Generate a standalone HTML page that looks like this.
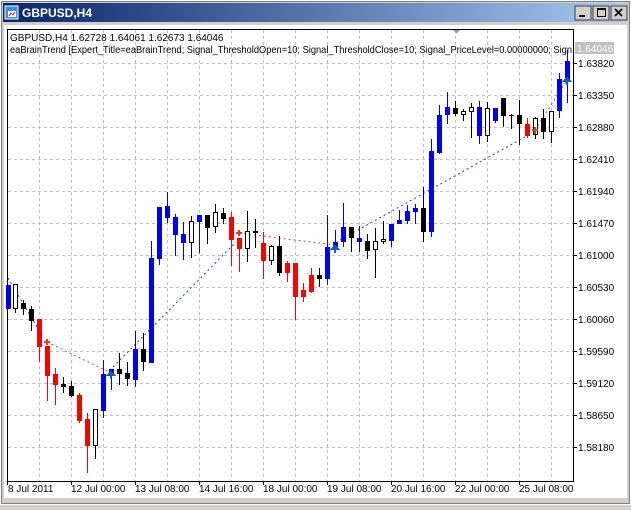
<!DOCTYPE html><html><head><style>body{margin:0;width:631px;height:505px;overflow:hidden;background:#d4d0c8}</style></head><body>
<svg width="631" height="505" xmlns="http://www.w3.org/2000/svg" font-family="Liberation Sans, sans-serif" shape-rendering="crispEdges">
<rect x="0" y="0" width="631" height="505" fill="#d4d0c8"/>
<rect x="0.5" y="0.5" width="630" height="504" fill="none" stroke="#fff"/>
<rect x="1.5" y="1.5" width="628" height="502" fill="none" stroke="#808080"/>
<defs><linearGradient id="tg" x1="0" x2="1"><stop offset="0" stop-color="#0a246a"/><stop offset="1" stop-color="#a6caf0"/></linearGradient></defs>
<rect x="3" y="3" width="625" height="19" fill="url(#tg)"/>
<rect x="5" y="6" width="13" height="13" fill="#3a8ee6" stroke="#fff"/><rect x="8" y="11" width="8" height="6" fill="#fff"/><path d="M9 16L11 13L13 15L15 12" stroke="#e03020" fill="none"/>
<text x="22" y="17" font-size="12" font-weight="bold" fill="#fff">GBPUSD,H4</text>
<g><rect x="575" y="6" width="16" height="14" fill="#d4d0c8" stroke="#404040"/><rect x="579" y="15" width="6" height="2" fill="#000"/>
<rect x="593" y="6" width="16" height="14" fill="#d4d0c8" stroke="#404040"/><rect x="597.5" y="8.5" width="8" height="8" fill="none" stroke="#000"/><rect x="597" y="8" width="9" height="2" fill="#000"/>
<rect x="611" y="6" width="16" height="14" fill="#d4d0c8" stroke="#404040"/><path d="M615 9L622 16M622 9L615 16" stroke="#000" stroke-width="1.6" shape-rendering="auto"/></g>
<rect x="4" y="25" width="623" height="473" fill="#fff"/>
<rect x="7.5" y="29.5" width="566" height="452" fill="none" stroke="#000"/>
<g stroke="#c0c0c0" stroke-dasharray="3,3">
<path d="M8 63.5H573M8 95.5H573M8 127.5H573M8 159.5H573M8 191.5H573M8 223.5H573M8 255.5H573M8 287.5H573M8 319.5H573M8 351.5H573M8 383.5H573M8 415.5H573M8 447.5H573"/>
<path d="M39.5 30V481M71.5 30V481M103.5 30V481M135.5 30V481M167.5 30V481M199.5 30V481M231.5 30V481M263.5 30V481M295.5 30V481M327.5 30V481M359.5 30V481M391.5 30V481M423.5 30V481M455.5 30V481M487.5 30V481M519.5 30V481M551.5 30V481"/>
</g>
<path d="M453 30L460 30L456.5 34Z" fill="#a0a0a0"/>
<g stroke="#0050a0" stroke-dasharray="2,3" fill="none" shape-rendering="auto">
<path d="M8 278L43 337"/><path d="M113 367L236 242"/><path d="M340 240L532 133"/></g>
<g stroke="#e04020" stroke-dasharray="2,3" fill="none" shape-rendering="auto">
<path d="M47 342L111 373"/><path d="M239 233L335 245"/><path d="M535 130L567 80"/></g>
<path stroke="#0000ff" d="M8.5 285V309M103.5 360V418M111.5 369V390M135.5 331V387M151.5 241V363M159.5 207V265M167.5 192V223M175.5 214V256M183.5 222V260M199.5 215V253M327.5 215V285M335.5 230V250M343.5 203V247M359.5 226V252M391.5 224V247M399.5 210V224M407.5 205V224M415.5 204V224M431.5 139V237M439.5 105V154M447.5 92V124M479.5 101V144M495.5 108V123M559.5 73V118M567.5 50V103"/>
<path stroke="#ff0000" d="M39.5 319V362M47.5 346V401M55.5 368V405M79.5 393V423M87.5 413V473M231.5 212V266M239.5 238V272M263.5 232V279M287.5 261V282M295.5 263V320M303.5 283V302M311.5 268V293M527.5 118V138"/>
<path stroke="#000" d="M23.5 300V315M31.5 306V331M63.5 377V393M71.5 381V397M119.5 353V385M127.5 362V386M143.5 333V371M207.5 215V244M223.5 208V224M255.5 219V248M279.5 236V276M319.5 268V287M351.5 227V252M367.5 234V259M423.5 187V242M455.5 101V116M503.5 98V127M511.5 114V129M519.5 100V145M543.5 109V139M15.5 284V313M95.5 409V459M191.5 216V258M215.5 204V233M247.5 211V262M271.5 245V265M375.5 228V278M383.5 221V244M463.5 109V121M471.5 103V138M487.5 102V142M535.5 117V139M551.5 111V143"/>
<g fill="#0000ff">
<rect x="6" y="285" width="5" height="24"/><rect x="101" y="374" width="5" height="37"/><rect x="109" y="369" width="5" height="5"/><rect x="133" y="349" width="5" height="31"/><rect x="149" y="258" width="5" height="105"/><rect x="157" y="207" width="5" height="52"/><rect x="165" y="206" width="5" height="12"/><rect x="173" y="217" width="5" height="18"/><rect x="181" y="234" width="5" height="9"/><rect x="197" y="215" width="5" height="7"/><rect x="325" y="247" width="5" height="32"/><rect x="333" y="242" width="5" height="5"/><rect x="341" y="227" width="5" height="15"/><rect x="357" y="238" width="5" height="4"/><rect x="389" y="224" width="5" height="17"/><rect x="397" y="220" width="5" height="4"/><rect x="405" y="211" width="5" height="10"/><rect x="413" y="208" width="5" height="4"/><rect x="429" y="151" width="5" height="81"/><rect x="437" y="115" width="5" height="38"/><rect x="445" y="107" width="5" height="8"/><rect x="477" y="107" width="5" height="29"/><rect x="493" y="108" width="5" height="13"/><rect x="557" y="79" width="5" height="32"/><rect x="565" y="61" width="5" height="20"/></g>
<g fill="#ff0000">
<rect x="37" y="319" width="5" height="28"/><rect x="45" y="346" width="5" height="30"/><rect x="53" y="374" width="5" height="11"/><rect x="77" y="395" width="5" height="26"/><rect x="85" y="419" width="5" height="27"/><rect x="229" y="217" width="5" height="23"/><rect x="237" y="238" width="5" height="11"/><rect x="261" y="243" width="5" height="18"/><rect x="285" y="263" width="5" height="10"/><rect x="293" y="263" width="5" height="34"/><rect x="301" y="290" width="5" height="7"/><rect x="309" y="275" width="5" height="17"/><rect x="525" y="124" width="5" height="12"/></g>
<g fill="#000">
<rect x="21" y="303" width="5" height="6"/><rect x="29" y="309" width="5" height="12"/><rect x="61" y="384" width="5" height="3"/><rect x="69" y="386" width="5" height="10"/><rect x="117" y="369" width="5" height="5"/><rect x="125" y="373" width="5" height="6"/><rect x="141" y="349" width="5" height="13"/><rect x="205" y="215" width="5" height="13"/><rect x="221" y="213" width="5" height="6"/><rect x="253" y="231" width="5" height="2"/><rect x="277" y="246" width="5" height="27"/><rect x="317" y="275" width="5" height="4"/><rect x="349" y="227" width="5" height="11"/><rect x="365" y="241" width="5" height="10"/><rect x="421" y="208" width="5" height="24"/><rect x="453" y="108" width="5" height="6"/><rect x="501" y="98" width="5" height="18"/><rect x="509" y="115" width="5" height="1"/><rect x="517" y="115" width="5" height="9"/><rect x="541" y="118" width="5" height="14"/></g>
<g fill="#fff" stroke="#000">
<rect x="13.5" y="284.5" width="4" height="24"/><rect x="93.5" y="409.5" width="4" height="36"/><rect x="189.5" y="221.5" width="4" height="21"/><rect x="213.5" y="212.5" width="4" height="14"/><rect x="245.5" y="231.5" width="4" height="17"/><rect x="269.5" y="246.5" width="4" height="14"/><rect x="373.5" y="241.5" width="4" height="8"/><rect x="381.5" y="239.5" width="4" height="2"/><rect x="461.5" y="111.5" width="4" height="3"/><rect x="469.5" y="107.5" width="4" height="4"/><rect x="485.5" y="108.5" width="4" height="27"/><rect x="533.5" y="118.5" width="4" height="16"/><rect x="549.5" y="111.5" width="4" height="20"/></g>
<g shape-rendering="auto">
<path d="M47 339v6M44 342h6" stroke="#e04020" stroke-width="2"/>
<path d="M239 230v6M236 233h6" stroke="#e04020" stroke-width="2"/>
<path d="M535 127v7M532 130h6" stroke="#e04020" stroke-width="2"/>
<path d="M111 372l-3 3h6z M111 373v6" stroke="#1060b0" stroke-width="2" fill="#1060b0"/>
<path d="M335 246l-3 3h6z M335 247v6" stroke="#1060b0" stroke-width="2" fill="#1060b0"/>
<path d="M567 78l-3 3h6z M567 79v6" stroke="#1060b0" stroke-width="2" fill="#1060b0"/>
</g>
<g font-size="10" fill="#000">
<text x="10" y="41">GBPUSD,H4  1.62728 1.64061 1.62673 1.64046</text>
<text x="10" y="53" textLength="562" lengthAdjust="spacingAndGlyphs">eaBrainTrend [Expert_Title=eaBrainTrend; Signal_ThresholdOpen=10; Signal_ThresholdClose=10; Signal_PriceLevel=0.00000000; Sign</text>
</g>
<rect x="575" y="42" width="39" height="12" fill="#c0c0c0"/>
<text x="577" y="52" font-size="10" fill="#fff">1.64046</text>
<g font-size="10" fill="#000">
<path stroke="#000" d="M573 63.5h4M573 95.5h4M573 127.5h4M573 159.5h4M573 191.5h4M573 223.5h4M573 255.5h4M573 287.5h4M573 319.5h4M573 351.5h4M573 383.5h4M573 415.5h4M573 447.5h4"/>
<text x="578" y="67">1.63820</text><text x="578" y="99">1.63350</text><text x="578" y="131">1.62880</text><text x="578" y="163">1.62410</text><text x="578" y="195">1.61940</text><text x="578" y="227">1.61470</text><text x="578" y="259">1.61000</text><text x="578" y="291">1.60530</text><text x="578" y="323">1.60060</text><text x="578" y="355">1.59590</text><text x="578" y="387">1.59120</text><text x="578" y="419">1.58650</text><text x="578" y="451">1.58180</text>
<path stroke="#000" d="M7.5 481v4M71.5 481v4M135.5 481v4M199.5 481v4M263.5 481v4M327.5 481v4M391.5 481v4M455.5 481v4M519.5 481v4"/>
<text x="8" y="492">8 Jul 2011</text><text x="71" y="492">12 Jul 00:00</text><text x="135" y="492">13 Jul 08:00</text><text x="199" y="492">14 Jul 16:00</text><text x="263" y="492">18 Jul 00:00</text><text x="327" y="492">19 Jul 08:00</text><text x="391" y="492">20 Jul 16:00</text><text x="455" y="492">22 Jul 00:00</text><text x="519" y="492">25 Jul 08:00</text>
</g>
</svg>
</body></html>
